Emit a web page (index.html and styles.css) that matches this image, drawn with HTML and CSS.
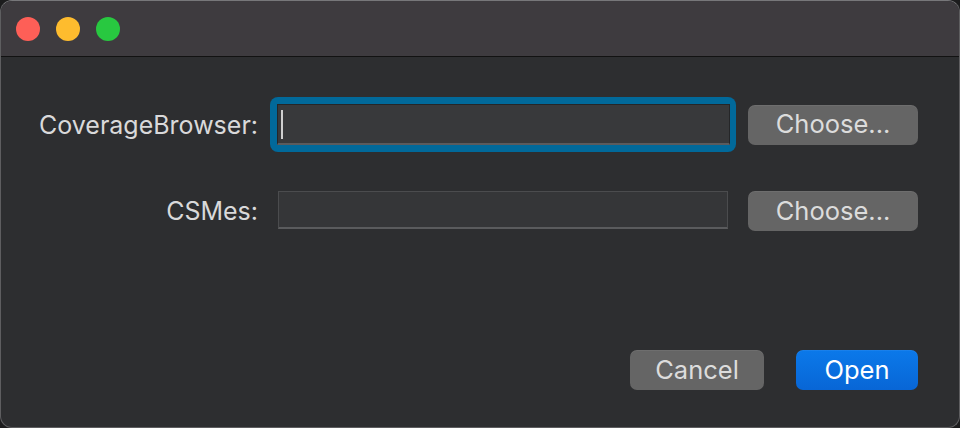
FILE: index.html
```html
<!DOCTYPE html>
<html>
<head>
<meta charset="utf-8">
<link rel="stylesheet" href="styles.css">
</head>
<body>
<div class="window">
  <div class="titlebar">
    <span class="light red"></span>
    <span class="light yellow"></span>
    <span class="light green"></span>
  </div>
  <div class="content">
    <div class="form">
      <label class="label">CoverageBrowser:</label>
      <div class="focus-ring"><div class="field focused"><span class="caret"></span></div></div>
      <button class="btn">Choose...</button>

      <label class="label">CSMes:</label>
      <div class="field plain"></div>
      <button class="btn">Choose...</button>
    </div>
    <div class="actions">
      <button class="btn cancel">Cancel</button>
      <button class="btn primary">Open</button>
    </div>
  </div>
</div>
</body>
</html>
```

FILE: styles.css
```css
* { box-sizing: border-box; }
html, body {
  margin: 0;
  padding: 0;
  background: #1c1c1d;
  width: 960px;
  height: 428px;
  overflow: hidden;
}
.window {
  width: 960px;
  height: 428px;
  border: 1px solid #5e5e60;
  border-top-color: #77777a;
  border-radius: 12px;
  background: #2d2e30;
  overflow: hidden;
  display: flex;
  flex-direction: column;
  font-family: Inter, "Liberation Sans", sans-serif;
}
.titlebar {
  height: 56px;
  flex: none;
  background: #3e3b3f;
  border-bottom: 1px solid #121212;
  display: flex;
  align-items: center;
  padding-left: 15px;
  gap: 16px;
}
.light {
  width: 24px;
  height: 24px;
  border-radius: 50%;
  display: block;
}
.red { background: #fe5f57; }
.yellow { background: #febc2e; }
.green { background: #28c840; }
.content {
  flex: 1;
  display: flex;
  flex-direction: column;
  padding: 40px 41px 37px 0;
}
.form {
  display: grid;
  grid-template-columns: 257px 466px 170px;
  column-gap: 12px;
  row-gap: 39px;
  align-items: center;
}
.label {
  text-align: right;
  color: #d9d9da;
  font-size: 25px;
  letter-spacing: 0;
}
.focus-ring {
  background: #01699a;
  border-radius: 8px;
  padding: 7px 6px 7px 7px;
  height: 55px;
}
.field {
  background: #38393b;
  border: 1px solid #4b4c4e;
  border-bottom: 2px solid #5a5b5d;
  height: 38px;
}
.focused {
  height: 41px;
  border-color: #252628;
  border-bottom-color: #5a5b5d;
  position: relative;
}
.caret {
  position: absolute;
  left: 3px;
  top: 5px;
  width: 2px;
  height: 29px;
  background: #cfcfcf;
}
.plain {
  margin-left: 8px;
  width: 450px;
  align-self: start;
  background: #353638;
}
.btn {
  height: 40px;
  border: none;
  border-radius: 7px;
  background: #656565;
  color: #dcdcdc;
  font-family: Inter, "Liberation Sans", sans-serif;
  font-size: 25.5px;
  padding: 0 0 2px 0;
  box-shadow: inset 0 1px 0 rgba(255,255,255,0.06);
}
.actions {
  margin-top: auto;
  display: flex;
  justify-content: flex-end;
  gap: 32px;
}
.cancel { width: 134px; }
.primary {
  width: 122px;
  background: linear-gradient(#0b79ea, #0866d6);
  color: #ffffff;
}
```
